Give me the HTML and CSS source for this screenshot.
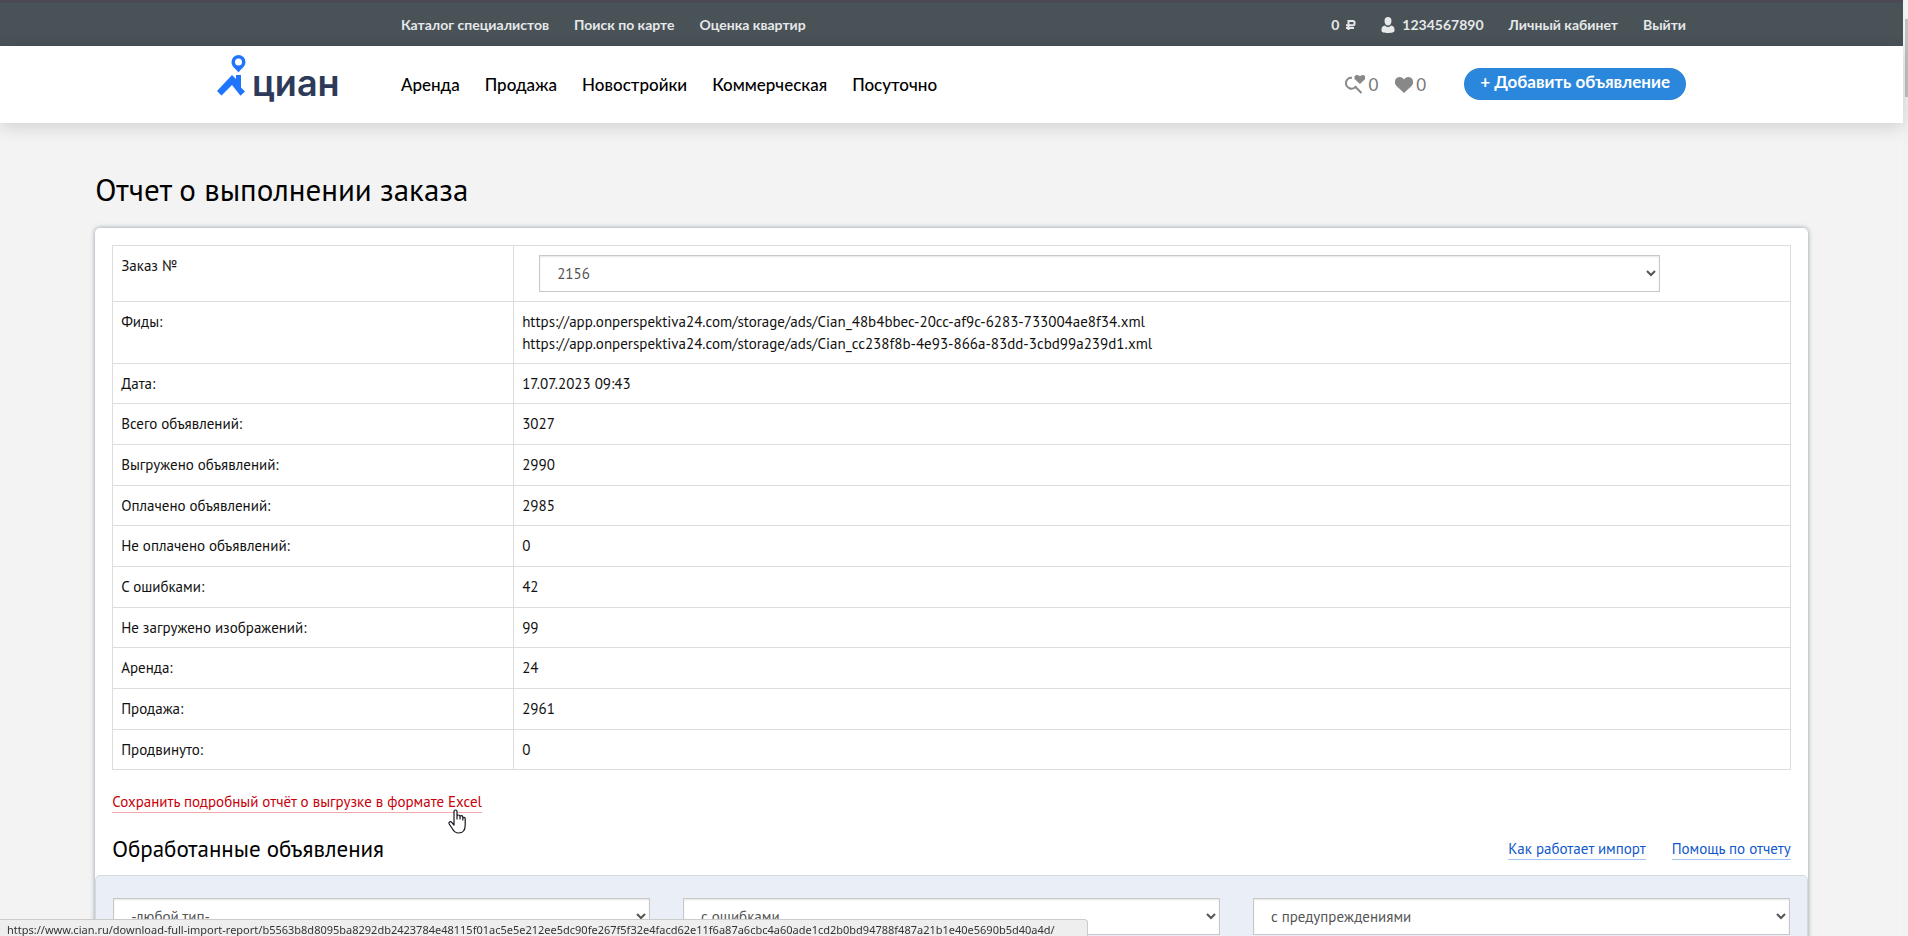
FILE: index.html
```html
<!DOCTYPE html>
<html lang="ru">
<head>
<meta charset="utf-8">
<title>Отчет о выполнении заказа</title>
<link rel="stylesheet" href="styles.css">
</head>
<body>
<div class="page">
  <div class="topbar">
    <div class="container topbar-inner">
      <nav class="top-links">
        <a href="#">Каталог специалистов</a>
        <a href="#">Поиск по карте</a>
        <a href="#">Оценка квартир</a>
      </nav>
      <div class="account">
        <a href="#" class="balance">0
          <svg width="10" height="10" viewBox="0 0 10 10" fill="none" stroke="currentColor" stroke-width="2"><path d="M2.500 10V1H7q1.500 0 1.500 1.500v1.200q0 1.500-1.500 1.500H0M0 8h8"/></svg></a>
        <a href="#" class="user">
          <svg width="14" height="16" viewBox="0 0 14 16" fill="currentColor"><path d="M7 0C4.700 0 3.500 1.600 3.500 4S4.900 8.500 7 8.500 10.500 6.400 10.500 4 9.300 0 7 0ZM4 8.500C1.500 9.300.5 10 .5 12.500V14c0 1 2.500 2 6.500 2s6.500-1 6.500-2v-1.500c0-2.500-1-3.200-3.500-4C9 9.600 8 10 7 10s-2-.4-3-1.500Z"/></svg>1234567890</a>
        <a href="#">Личный кабинет</a>
        <a href="#">Выйти</a>
      </div>
    </div>
  </div>
  <header class="header">
    <div class="container header-inner">
      <a href="#" class="logo" aria-label="Циан">
        <svg class="logo-mark" width="28" height="41" viewBox="0 0 28 41" fill="#1f75fe"><path fill-rule="evenodd" d="M21.500 0a7 7 0 0 0-7 7c0 4.500 4 6.500 7 10.500 3-4 7-6 7-10.500a7 7 0 0 0-7-7Zm0 3.500a3.500 3.500 0 1 1 0 7 3.500 3.500 0 0 1 0-7Z"/><path d="M0 36 15 20l4 4v-4h5v12.500l4 4-4.500 4.200L15 30 4.500 40.500Z"/></svg>
        <span class="logo-text">циан</span>
      </a>
      <nav class="main-links">
        <a href="#">Аренда</a>
        <a href="#">Продажа</a>
        <a href="#">Новостройки</a>
        <a href="#">Коммерческая</a>
        <a href="#">Посуточно</a>
      </nav>
      <div class="tools">
        <a href="#" class="counter" aria-label="Сохранённые поиски">
          <svg width="20" height="20" viewBox="0 0 20 20"><path d="M7 2.700A5.500 5.500 0 1 0 11.200 11M10.500 12l6 6" fill="none" stroke="#888" stroke-width="2"/><path d="M15 9 9.800 4.200C8.600 2 10-.2 12.300.1c1.200.1 2.100.5 2.700 1.500.6-1 1.500-1.400 2.700-1.500C20 0 21 2 19.900 4.200Z" fill="#888"/></svg>0</a>
        <a href="#" class="counter" aria-label="Избранное">
          <svg width="18" height="16" viewBox="0 0 18 16" fill="#888"><path d="M9 16 1.500 9C-1 6.500-.5 2 2.500.6 5-.6 7.700.3 9 2.500 10.300.3 13-.6 15.500.6c3 1.400 3.500 5.900 1 8.400Z"/></svg>0</a>
        <a href="#" class="add-button">+ Добавить объявление</a>
      </div>
    </div>
  </header>
  <main class="content">
    <h1 class="title">Отчет о выполнении заказа</h1>
    <section class="card">
      <div class="card-body">
        <table class="report">
          <tbody>
            <tr><th scope="row"><label for="order">Заказ №</label></th><td><select id="order" class="field order-field"><option>2156</option></select></td></tr>
            <tr><th scope="row">Фиды:</th><td>https://app.onperspektiva24.com/storage/ads/Cian_48b4bbec-20cc-af9c-6283-733004ae8f34.xml<br>https://app.onperspektiva24.com/storage/ads/Cian_cc238f8b-4e93-866a-83dd-3cbd99a239d1.xml</td></tr>
            <tr><th scope="row">Дата:</th><td>17.07.2023 09:43</td></tr>
            <tr><th scope="row">Всего объявлений:</th><td>3027</td></tr>
            <tr><th scope="row">Выгружено объявлений:</th><td>2990</td></tr>
            <tr><th scope="row">Оплачено объявлений:</th><td>2985</td></tr>
            <tr><th scope="row">Не оплачено объявлений:</th><td>0</td></tr>
            <tr><th scope="row">С ошибками:</th><td>42</td></tr>
            <tr><th scope="row">Не загружено изображений:</th><td>99</td></tr>
            <tr><th scope="row">Аренда:</th><td>24</td></tr>
            <tr><th scope="row">Продажа:</th><td>2961</td></tr>
            <tr><th scope="row">Продвинуто:</th><td>0</td></tr>
          </tbody>
        </table>
        <p class="download"><a href="#" class="link link-hover">Сохранить подробный отчёт о выгрузке в формате Excel<svg class="pointer" width="18" height="25" viewBox="0 0 18 25" fill="#fff" stroke="#15151f" stroke-width="1.200" stroke-linejoin="round"><path d="M6 14V2.500a1.500 1.500 0 0 1 3 0V10V7.500a1.500 1.500 0 0 1 3 0V10 8a1.400 1.400 0 0 1 2.800 0v3-1.500a1.200 1.200 0 0 1 2.400 0V16c0 5-2.500 8-6.500 8-3.500 0-5-1.500-6.500-4.500L1.200 15c-.8-2 .8-3 2.300-1.800L6 16Z"/></svg></a></p>
        <div class="section-head">
          <h2 class="subtitle">Обработанные объявления</h2>
          <nav class="help-links">
            <a href="#" class="link">Как работает импорт</a>
            <a href="#" class="link">Помощь по отчету</a>
          </nav>
        </div>
      </div>
      <form class="filters">
        <select class="field" aria-label="Тип объявления"><option>-любой тип-</option></select>
        <select class="field" aria-label="Ошибки"><option>с ошибками</option></select>
        <select class="field" aria-label="Предупреждения"><option>с предупреждениями</option></select>
      </form>
    </section>
  </main>
</div>
<div class="scrollbar"><div class="scroll-thumb"></div></div>
<div class="status">https://www.cian.ru/download-full-import-report/b5563b8d8095ba8292db2423784e48115f01ac5e5e212ee5dc90fe267f5f32e4facd62e11f6a87a6cbc4a60ade1cd2b0bd94788f487a21b1e40e5690b5d40a4d/</div>
</body>
</html>
```
FILE: styles.css
```css
* { box-sizing: border-box; }

html, body { height: 100%; }

body {
  margin: 0;
  overflow: hidden;
  display: flex;
  background: #f3f3f3;
  color: #111;
  font: 15px/22px "PT Sans", "Noto Sans", sans-serif;
}

a { color: inherit; text-decoration: none; }
svg { flex: none; }

.page { flex: 1; min-width: 0; }

.container {
  width: 77.2%;
  margin: 0 auto;
}

.topbar {
  background: #485257;
  border-top: 3px solid #4a4954;
  color: #e6e8e9;
  font: bold 14px/18px Lato, sans-serif;
}

.topbar-inner {
  display: flex;
  justify-content: space-between;
  padding: 13px 0 12px 184px;
}

.top-links { display: flex; gap: 25px; }
.account { display: flex; gap: 25px; }
.balance, .user { display: flex; align-items: center; gap: 7px; }

.header {
  position: relative;
  background: #fff;
  box-shadow: 0 4px 16px rgba(0, 0, 0, 0.14);
  font: 17px/24px Lato, sans-serif;
}

.header-inner {
  display: flex;
  align-items: flex-start;
  padding: 9px 0 22px;
}

.logo {
  display: flex;
  align-items: flex-end;
  gap: 7px;
  width: 184px;
  height: 46px;
}

.logo-mark { margin-bottom: 5px; overflow: visible; }

.logo-text {
  color: #2e3a59;
  font: 600 36px/36px Inter, sans-serif;
}

.main-links {
  display: flex;
  flex: 1;
  gap: 25px;
  padding-top: 18px;
  color: #000;
  font-weight: 500;
}

.tools {
  display: flex;
  align-items: flex-start;
  padding-top: 13px;
}

.counter {
  display: flex;
  align-items: center;
  gap: 3px;
  margin: 5px 17px 0 0;
  color: #777;
}

.add-button {
  margin-left: 21px;
  padding: 2px 16px 6px;
  border-radius: 16px;
  background: #2b87db;
  color: #fff;
  font-weight: bold;
}

.content {
  width: 90%;
  margin: 0 auto;
}

.title {
  margin: 0;
  padding: 47px 0 18px;
  color: #000;
  font-size: 31px;
  font-weight: 400;
  line-height: 40px;
}

.card {
  border-radius: 5px;
  background: #fff;
  box-shadow: 0 0 5px #8f9ba6;
}

.card-body { padding: 17px 17px 0; }

.report {
  width: 100%;
  border-collapse: collapse;
  table-layout: fixed;
}

.report th, .report td {
  padding: 9px 8px;
  border: 1px solid #ddd;
  font-weight: 400;
  text-align: left;
  vertical-align: top;
}

.report th { width: 401px; }

.report tr:nth-child(2) > *,
.report tr:nth-child(3n) > * { padding-bottom: 8px; }

.field {
  display: block;
  width: 100%;
  height: 37px;
  padding: 0 13px;
  border: 1px solid #c8c8c8;
  border-radius: 0;
  background: #fff;
  box-shadow: inset 0 1px 2px rgba(0, 0, 0, 0.1);
  color: #555;
  font: inherit;
}

.order-field { width: 89%; margin-left: 17px; }

.download { margin: 21px 0 0; }

.link {
  position: relative;
  display: inline-block;
  border-bottom: 1px solid #a5c6ee;
  color: #0f58cc;
  line-height: 20px;
}

.link-hover { border-color: #efa9a9; color: #c8000a; }

.pointer {
  position: absolute;
  top: 17px;
  right: 16px;
}

.section-head {
  display: flex;
  align-items: center;
  justify-content: space-between;
  padding: 20px 0 10px;
}

.subtitle {
  margin: 0;
  color: #000;
  font-size: 23px;
  font-weight: 400;
  line-height: 32px;
}

.help-links { display: flex; gap: 26px; }

.filters {
  display: grid;
  grid-template-columns: repeat(3, 1fr);
  gap: 33px;
  padding: 22px 17px;
  border: 1px solid #d5dade;
  border-radius: 5px;
  background: #eaeff7;
}

.scrollbar {
  flex: none;
  width: 5px;
  padding: 19px 0 0 2px;
  background: #f1f1f1;
}

.scroll-thumb { height: 78px; background: #c1c1c1; }

.status {
  position: fixed;
  bottom: 0;
  left: 0;
  min-width: 57%;
  height: 17px;
  padding: 0 3px 0 7px;
  border: 1px solid #ccc;
  border-width: 1px 1px 0 0;
  border-radius: 0 4px 0 0;
  background: #eee;
  color: #333;
  font: 11px/19px "Noto Sans", sans-serif;
  white-space: nowrap;
}
```
